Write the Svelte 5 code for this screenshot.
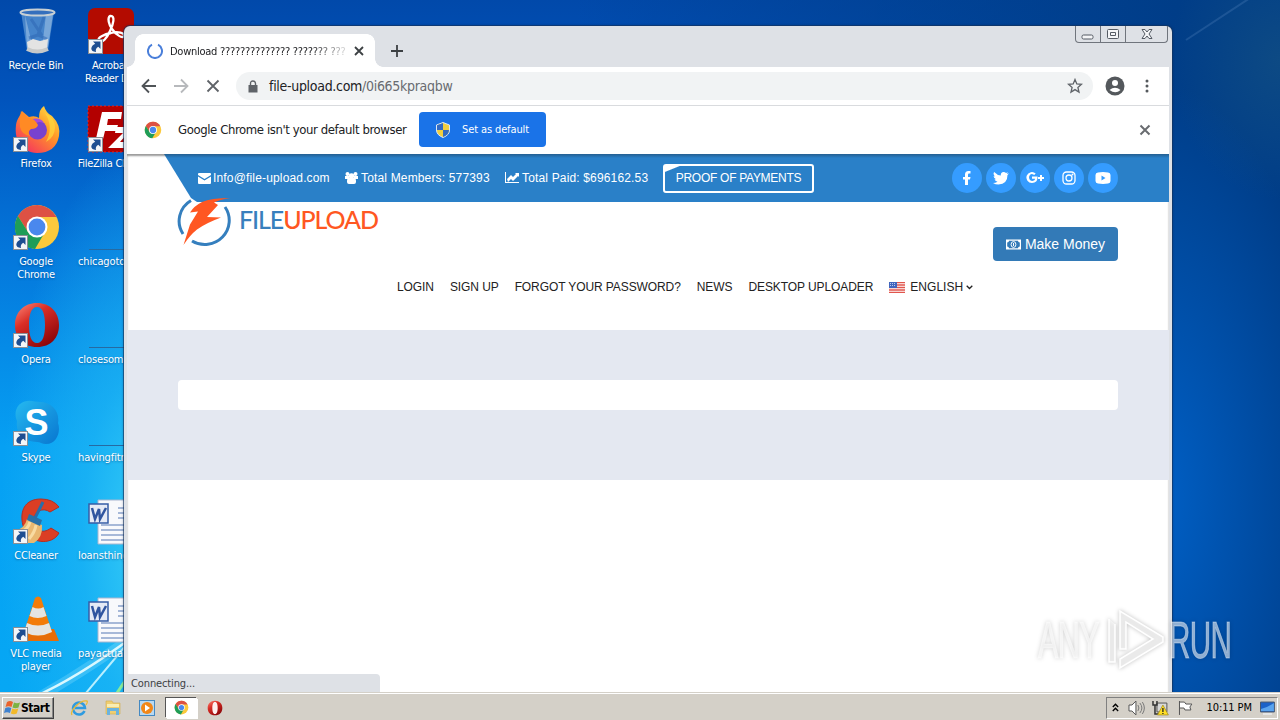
<script lang="ts">
	const shortcuts = [
		{ icon: 'bin', lines: ['Recycle Bin'], link: false },
		{ icon: 'firefox', lines: ['Firefox'], link: true },
		{ icon: 'chrome', lines: ['Google', 'Chrome'], link: true },
		{ icon: 'opera', lines: ['Opera'], link: true },
		{ icon: 'skype', lines: ['Skype'], link: true },
		{ icon: 'ccleaner', lines: ['CCleaner'], link: true },
		{ icon: 'vlc', lines: ['VLC media', 'player'], link: true }
	];

	const files = [
		{ icon: 'acrobat', lines: ['Acrobat', 'Reader DC'], link: true },
		{ icon: 'filezilla', lines: ['FileZilla Client'], link: true },
		{ icon: 'blank', lines: ['chicagoto'], link: false, doc: true },
		{ icon: 'blank', lines: ['closesome'], link: false, doc: true },
		{ icon: 'blank', lines: ['havingfitn'], link: false, doc: true },
		{ icon: 'word', lines: ['loansthing'], link: false, doc: true },
		{ icon: 'word', lines: ['payactual'], link: false, doc: true }
	];

	const socials = ['facebook', 'twitter', 'gplus', 'instagram', 'youtube'];
	const nav = ['LOGIN', 'SIGN UP', 'FORGOT YOUR PASSWORD?', 'NEWS', 'DESKTOP UPLOADER'];
</script>

{#snippet chromeLogo()}
	<circle cx="24" cy="24" r="22" fill="#fbc93c" />
	<path d="M4.900 13A22 22 0 0 1 43.500 14H24L15 29Z" fill="#dd5144" />
	<path d="M4.900 13A22 22 0 0 0 22 46L32 29 24 33 15 29Z" fill="#1f9d58" />
	<circle cx="24" cy="24" r="10.500" fill="#fff" />
	<circle cx="24" cy="24" r="8.400" fill="#4a88ee" />
{/snippet}

{#snippet operaLogo()}
	<path
		fill-rule="evenodd"
		fill="url(#opera-red)"
		d="M24 2C11 2 2 11 2 24s8 22 22 22 22-9 22-22S37 2 24 2Zm0 4c6 0 8 8 8 18s-2 18-8 18-8-8-8-18 2-18 8-18Z"
	/>
{/snippet}

{#snippet appIcon(name)}
	<svg class="app-icon" viewBox="0 0 48 48">
		{#if name === 'bin'}
			<path d="M8 5h33l-6 38q-10 5-21 0Z" fill="#6fa6dc" fill-opacity=".62" />
			<path d="m12 8 8 33h-6ZM33 7l-4 35 6-2 5-33Z" fill="#c6dcf0" fill-opacity=".4" />
			<path d="M18 12 28 27 16 31M31 10l-6 18 9 4" fill="none" stroke="#2c64b1" stroke-width="3" opacity=".5" />
			<path d="m14 35 6-3 7 2 8-2-1 10q-9 5-19 1Z" fill="#e3e3e3" />
			<path d="M14 42q10 5 21 0" fill="none" stroke="#c7c9c9" stroke-width="4" />
			<ellipse cx="24.500" cy="5.500" rx="17" ry="3" fill="#356fbd" stroke="#c7cfd4" stroke-width="2" />
		{:else if name === 'firefox'}
			<path
				d="M3 20C4 13 8 10 9 6l7 6q6-2 10 1 0-9 5-12 2 7 8 10 9 9 7 20-3 17-22 17C9 47 1 36 3 20Z"
				fill="url(#fox)"
			/>
			<circle cx="24.500" cy="25" r="9.500" fill="#7842cf" />
			<path d="M19 14q9-2 12 4-6-2-7 0Z" fill="#a44be0" />
			<path d="m8 6 6 7q7-1 11 7-1 4-7 4-4 3-1 7-8-1-10-9-1-8 1-16Z" fill="#ff8a24" />
			<path d="M32 8q10 5 10 14 0 10-9 15 8-15-1-29Z" fill="#ffd73c" opacity=".75" />
		{:else if name === 'chrome'}
			{@render chromeLogo()}
		{:else if name === 'opera'}
			{@render operaLogo()}
		{:else if name === 'skype'}
			<path
				d="M7 5C14-1 22 3 27 3c12 0 20 10 18 21 3 8-1 21-12 21-4 0-6-2-9-2C11 43 2 34 4 22 1 16 3 8 7 5Z"
				fill="url(#sky)"
			/>
			<text x="23.500" y="36" class="skype-letter">S</text>
		{:else if name === 'ccleaner'}
			<path
				d="M46 10Q40 2 28 2C13 2 8 12 9 23c1 14 13 24 26 21 5-1 9-4 11-8l-8-5c-9 7-17 2-17-8 0-9 9-13 16-8Z"
				fill="#db3e24"
				stroke="#b62e21"
			/>
			<path d="M2 34q10-3 12-12l15 6q1 12-8 18H10Z" fill="#e9b871" />
			<path d="M8 36q7-4 9-11M16 42q6-7 7-14" fill="none" stroke="#f8dba2" stroke-width="3" />
			<path d="m16 17 13 6-2 6-13-6Z" fill="#2971a8" />
			<path d="m22 21 8-16" stroke="#286eaa" stroke-width="3" />
		{:else if name === 'vlc'}
			<path d="m9 34-4 12h41l-5-12Z" fill="#e66d08" />
			<path d="M22 3q3-3 6 0l11 34q-14 8-28 0Z" fill="#f37c09" />
			<path d="m19.500 12-3 9q8 4 17 0l-3-9q-5 3-11 0Zm-5.500 16-3 9q14 7 28 0l-3-9q-11 5-22 0Z" fill="#e5e5e2" />
		{:else if name === 'acrobat'}
			<rect x="1" y="1" width="46" height="46" rx="7" fill="#b30b00" />
			<path
				d="M23 9c6-1 3 9 0 15-3 7-8 13-11 10s6-7 12-8c7-2 14 0 13 3s-8-1-12-7C22 18 20 11 23 9Z"
				fill="none"
				stroke="#fff"
				stroke-width="2.300"
			/>
		{:else if name === 'filezilla'}
			<rect x="1" y="1" width="46" height="46" fill="#b30000" stroke="#df2929" stroke-dasharray="2 2" />
			<path d="M15 7h20l-1 7H21l-1 6h11l-2 6H18l-3 12H8ZM29 22h17L33 37h12v6H21L36 28h-8Z" fill="#fff" />
		{:else if name === 'blank'}
			<path d="M2 46.500h46" stroke="#266aa2" />
		{:else if name === 'word'}
			<path d="M11 3h37v44H11Z" fill="#f8f9fc" stroke="#a8b6cf" />
			<path
				d="M31 11h14M31 16h14M31 21h14M14 28h33M14 33h33M14 38h33M14 43h33"
				stroke="#8ba3cb"
				stroke-width="1.500"
			/>
			<path d="M2 7h19v19H2Z" fill="#e5eaf6" stroke="#365da6" stroke-width="1.500" />
			<path d="m5 11 3 11 4-10 1 10 6-11" fill="none" stroke="#3055a0" stroke-width="2.500" />
		{/if}
	</svg>
{/snippet}

{#snippet desktopIcon(item)}
	<div class="shortcut" class:doc={item.doc}>
		<div class="picture">
			{@render appIcon(item.icon)}
			{#if item.link}
				<svg class="arrow" viewBox="0 0 15 15">
					<rect x=".5" y=".5" width="14" height="14" fill="#f4f6f8" stroke="#8a8f96" />
					<path d="M5 2.500h7.500V10L10.300 7.800Q7 9.500 8 13 3.300 12.500 3.300 9.500 3.500 6.500 7.200 4.700Z" fill="#1e4e91" />
				</svg>
			{/if}
		</div>
		{#each item.lines as line}
			<span>{line}</span>
		{/each}
	</div>
{/snippet}

<svg class="defs" width="0" height="0">
	<defs>
		<linearGradient id="opera-red" x2=".7" y2="1">
			<stop stop-color="#ff8a7b" />
			<stop offset=".4" stop-color="#d92e26" />
			<stop offset="1" stop-color="#8c0509" />
		</linearGradient>
		<linearGradient id="fox" x1="1" x2=".2" y2="1">
			<stop stop-color="#fff04b" />
			<stop offset=".45" stop-color="#ff9827" />
			<stop offset="1" stop-color="#f52e62" />
		</linearGradient>
		<linearGradient id="sky" x2="1" y2="1">
			<stop stop-color="#25b9f0" />
			<stop offset="1" stop-color="#0876d0" />
		</linearGradient>
	</defs>
</svg>

<div class="desktop">
	<svg class="wallpaper" viewBox="0 0 1280 692">
		<path d="M0 718Q75 680 150 624" fill="none" stroke="#a7ecff" stroke-width="10" opacity=".25" />
		<path d="M34 697Q82 676 150 624" fill="none" stroke="#d9f8ff" stroke-width="2.500" />
		<path d="m86 693 52-62" stroke="#b8efff" stroke-width="2" />
		<path d="m117 693 12-18" stroke="#87ec9a" stroke-width="3" />
		<path d="M1186 40 1250-2" stroke="#719bd0" stroke-width="2" opacity=".22" />
	</svg>

	<div class="icons">
		<div class="icon-column">
			{#each shortcuts as item}
				{@render desktopIcon(item)}
			{/each}
		</div>
		<div class="icon-column second">
			{#each files as item}
				{@render desktopIcon(item)}
			{/each}
		</div>
	</div>

	<div class="window">
		<div class="tab-strip">
			<div class="tab">
				<svg width="16" height="16" viewBox="0 0 16 16">
					<path d="M11 1.700A7 7 0 1 1 5 1.700" fill="none" stroke="#4a7fda" stroke-width="2" />
				</svg>
				<span class="title">Download ?????????????? ??????? ???</span>
				<svg width="10" height="10" viewBox="0 0 10 10">
					<path d="m1 1 8 8M9 1 1 9" stroke="#3c4043" stroke-width="1.800" />
				</svg>
			</div>
			<svg class="new-tab" width="14" height="14" viewBox="0 0 14 14">
				<path d="M7 1v12M1 7h12" stroke="#3c4043" stroke-width="1.800" />
			</svg>
			<div class="captions">
				<span><svg width="14" height="12"><rect x="1" y="7" width="11" height="4" rx="1.500" /></svg></span>
				<span>
					<svg width="14" height="12">
						<rect x="1.500" y="1.500" width="11" height="9" rx="1" />
						<path d="M4.500 4.500h5v3h-5Z" />
					</svg>
				</span>
				<span class="wide">
					<svg width="14" height="12">
						<path d="M2 1.500h3l2 2.500 2-2.500h3L9 6l3 4.500H9L7 8l-2 2.500H2L5 6Z" />
					</svg>
				</span>
			</div>
		</div>

		<div class="toolbar">
			<svg width="18" height="18" viewBox="0 0 18 18" class="line">
				<path d="M16 9H3M9 2.500 2.500 9 9 15.500" stroke="#505458" />
			</svg>
			<svg width="18" height="18" viewBox="0 0 18 18" class="line">
				<path d="M2 9h13M9 2.500 15.500 9 9 15.500" stroke="#b7b9bc" />
			</svg>
			<svg width="18" height="18" viewBox="0 0 18 18" class="line">
				<path d="m3.500 3.500 11 11M14.500 3.500l-11 11" stroke="#5f6368" />
			</svg>
			<div class="omnibox">
				<svg width="10" height="13" viewBox="0 0 10 13">
					<path d="M.5 5h9v7.500h-9Z" fill="#5f6368" />
					<path d="M2.500 6V3.500q0-2.500 2.500-2.500t2.500 2.500V6" fill="none" stroke="#5f6368" stroke-width="1.400" />
				</svg>
				<span class="url">file-upload.com<i>/0i665kpraqbw</i></span>
				<svg class="star" width="16" height="16" viewBox="0 0 16 16">
					<path d="m8 1.500 1.800 4.400 4.700.4-3.600 3.100 1.100 4.700L8 11.600l-4 2.500 1.100-4.700-3.600-3.100 4.700-.4Z" />
				</svg>
			</div>
			<svg width="20" height="20" viewBox="0 0 20 20">
				<circle cx="10" cy="10" r="9.500" fill="#54585c" />
				<circle cx="10" cy="7" r="3" fill="#fff" />
				<path d="M4.500 14q5.500-4.500 11 0-5 4.500-11 0Z" fill="#fff" />
			</svg>
			<svg class="dots" width="4" height="16" viewBox="0 0 4 16">
				<circle cx="2" cy="3" r="1.500" /><circle cx="2" cy="8" r="1.500" /><circle cx="2" cy="13" r="1.500" />
			</svg>
		</div>

		<div class="infobar">
			<svg width="18" height="18" viewBox="0 0 48 48">{@render chromeLogo()}</svg>
			<span class="message">Google Chrome isn't your default browser</span>
			<button type="button" class="default">
				<svg width="14" height="16" viewBox="0 0 14 16">
					<path d="M7 .5 13.500 3v5q0 5-6.500 7.500Q.5 13 .5 8V3Z" fill="#f2cf3e" stroke="#dce8f7" />
					<path d="M7 1v7H1V3.300ZM7 8h6q0 5-6 7Z" fill="#326ac2" />
				</svg>
				<span>Set as default</span>
			</button>
			<svg class="dismiss" width="12" height="12" viewBox="0 0 12 12">
				<path d="m1.500 1.500 9 9M10.500 1.500l-9 9" stroke="#696c70" stroke-width="2" />
			</svg>
		</div>

		<div class="page">
			<div class="top-bar">
				<span class="stat">
					<svg width="13" height="14" viewBox="0 0 13 14">
						<path d="M0 3q0-1 1-1h11q1 0 1 1v1L6.500 8 0 4ZM0 5.500l6.500 4 6.500-4V12q0 1-1 1H1q-1 0-1-1Z" />
					</svg>
					<b class="mail">Info@file-upload.com</b>
				</span>
				<span class="stat">
					<svg width="13" height="14" viewBox="0 0 13 14">
						<circle cx="2.500" cy="3" r="2" /><circle cx="10.500" cy="3" r="2" /><circle cx="6.500" cy="5" r="2.800" />
						<path d="M0 5h4v3H0ZM9 5h4v3H9ZM2 10q0-3 2-3h5q2 0 2 3v1q0 2-2 2H4q-2 0-2-2Z" />
					</svg>
					<b class="members">Total Members: 577393</b>
				</span>
				<span class="stat">
					<svg width="14" height="14" viewBox="0 0 14 14">
						<path d="M0 1h1v10h13v1H0ZM2 8l4-4 2 2 3-3-1-1h4v4l-1-1-5 5-2-2-3 3Z" />
					</svg>
					<b class="paid">Total Paid: $696162.53</b>
				</span>
				<button type="button" class="proof">PROOF OF PAYMENTS</button>
				<div class="socials">
					{#each socials as social}
						<span>
							<svg width="18" height="18" viewBox="0 0 18 18">
								{#if social === 'facebook'}
									<path d="M12.500 2v2.500H11q-1 0-1 1.200V8h2.500L12 10.500h-2V16H7v-5.500H5V8h2V5.500Q7 2 10.500 2Z" />
								{:else if social === 'twitter'}
									<path
										d="M17 4.500 15.500 6q0 9-9 9.500Q3.500 15.500 1 14q2.500 0 4.500-1.300Q3 12 2.500 10.300H4Q1.500 9 1.600 7l1.400.4Q.6 5 2.200 3q3 3.300 6.600 3.500Q8.500 3 11.700 3q1.300 0 2.300 1l2-.8-1.300 1.800Z"
									/>
								{:else if social === 'gplus'}
									<path
										d="M6 7.500h5.500q.4 6.500-5.500 6.500a5.500 5.500 0 1 1 3.700-9.500L8.200 6Q4 3.300 3 8q.2 4 3.500 4Q9 11.600 9.200 9.700H6ZM14 6h2v2h2v2h-2v2h-2v-2h-2V8h2Z"
									/>
								{:else if social === 'instagram'}
									<g fill="none" stroke="#fff" stroke-width="1.300">
										<rect x="3" y="3" width="12" height="12" rx="3.500" />
										<circle cx="9" cy="9" r="3" />
									</g>
									<circle cx="12.500" cy="5.500" r="1" />
								{:else}
									<path
										fill-rule="evenodd"
										d="M4 3.500q5-.8 10 0 2.500.2 2.500 2.500v6q0 2.300-2.500 2.500-5 .8-10 0Q1.500 14.300 1.500 12V6Q1.500 3.700 4 3.500Zm3.500 3v5l4-2.500Z"
									/>
								{/if}
							</svg>
						</span>
					{/each}
				</div>
			</div>

			<header>
				<div class="brand-row">
					<div class="brand">
						<svg width="54" height="50" viewBox="0 0 54 50">
							<path
								d="M14 3.500A24.500 24 0 0 0 6 37M15 44A24.500 24 0 0 0 48 10"
								fill="none"
								stroke="#357fbe"
								stroke-width="3"
							/>
							<path
								d="M53.500 1Q34 1 25 5 17 9 13 15.500l8-1-8 13L6.500 48Q13 38 20 32.500 29 26 44 20.500L30 20 41 8l-4-2.500Q44 2 53.500 1Z"
								fill="#ff5722"
							/>
						</svg>
						<strong>FILE<em>UPLOAD</em></strong>
					</div>
					<button type="button" class="money">
						<svg width="15" height="11" viewBox="0 0 15 11">
							<path
								d="M0 .5h15v10H0ZM3 1.700Q3 3.500 1.200 3.500v4Q3 7.500 3 9.300h9q0-1.800 1.800-1.800v-4Q12 3.500 12 1.700Z"
								fill-rule="evenodd"
							/>
							<ellipse cx="7.500" cy="5.500" rx="2.400" ry="2.900" fill="none" stroke="#fff" />
							<path d="M7 4h1v3H7Z" />
						</svg>
						<span>Make Money</span>
					</button>
				</div>
				<nav>
					{#each nav as label}
						<span>{label}</span>
					{/each}
					<span class="language">
						<svg width="16" height="11" viewBox="0 0 16 11">
							<path d="M0 0h16v11H0Z" fill="#fff" />
							<path d="M0 .5h16M0 3h16M0 5.500h16M0 8h16M0 10.500h16" stroke="#e1564d" stroke-width="1.300" />
							<path d="M0 0h8v6H0Z" fill="#4165bd" />
							<path d="M1 1.500h6M1 3.500h6" stroke="#b9c9ed" stroke-dasharray="1 1" />
						</svg>
						<span>ENGLISH</span>
						<svg width="7" height="5" viewBox="0 0 7 5">
							<path d="m.7.700 2.800 2.800L6.300.7" fill="none" stroke="#222" stroke-width="1.300" />
						</svg>
					</span>
				</nav>
			</header>

			<main><div class="panel"></div></main>
			<div class="status">Connecting...</div>
		</div>
	</div>

	<div class="watermark">
		<span>ANY</span>
		<svg width="58" height="66" viewBox="0 0 58 66">
			<path d="M2 11v43h6V16M13 3v38h6V14l27 17-33 20v9l43-26v-5Z" />
		</svg>
		<span class="run">RUN</span>
	</div>

	<div class="taskbar">
		<div class="start">
			<svg width="17" height="16" viewBox="0 0 17 16">
				<path d="M3 2q3-2 6 0L7.500 7q-3-1.500-6 0Z" fill="#ea632c" />
				<path d="M10 2.500q3 1.500 6 0l-1.500 5q-3 1.500-6 0Z" fill="#7cb342" />
				<path d="M1.300 8q3-1.500 6 0L6 13q-3-1.500-6 0Z" fill="#3f82cf" />
				<path d="M8.300 8.500q3 1.500 6 0l-1.500 5q-3 1.500-6 0Z" fill="#f2b929" />
			</svg>
			Start
		</div>
		<div class="pinned">
			<span>
				<svg width="18" height="18" viewBox="0 0 18 18">
					<path d="M14.500 12A6 6 0 1 1 15 9H5" fill="none" stroke="#2f9be0" stroke-width="2.500" />
					<path d="M2 16Q0 13 6 7t11-5q1 1-1 4" fill="none" stroke="#e8b936" stroke-width="1.300" />
				</svg>
			</span>
			<span>
				<svg width="16" height="16" viewBox="0 0 16 16">
					<path d="M1 1h6l1 2h7v11H1Z" fill="#efce72" stroke="#d2ac4c" stroke-width=".6" />
					<path d="M2 4h12v3H2Z" fill="#f9edb3" />
					<path d="M2 8h12v7h-3v-4H5v4H2Z" fill="#6bb3df" />
				</svg>
			</span>
			<span>
				<svg width="16" height="16" viewBox="0 0 16 16">
					<rect x=".5" y=".5" width="15" height="15" fill="#b8d9f2" stroke="#4489c2" />
					<circle cx="8" cy="8" r="6" fill="#f28718" />
					<path d="m6 4.500 5 3.500-5 3.500Z" fill="#fff" />
				</svg>
			</span>
			<span class="active"><svg width="15" height="15" viewBox="0 0 48 48">{@render chromeLogo()}</svg></span>
			<span>
				<svg width="16" height="16" viewBox="0 0 48 48">
					<circle cx="24" cy="24" r="20" fill="#fff0ef" />
					{@render operaLogo()}
				</svg>
			</span>
		</div>
		<div class="tray">
			<svg width="7" height="9" viewBox="0 0 7 9">
				<path d="m.8 4 2.700-2.700L6.200 4M.8 8l2.700-2.700L6.200 8" fill="none" stroke="#000" stroke-width="1.400" />
			</svg>
			<svg width="17" height="16" viewBox="0 0 17 16" class="speaker">
				<path d="M1 5h3l4-4v14l-4-4H1Z" fill="#fff" stroke="#555" />
				<path d="M10 5q2 3 0 6M12 3q4 5 0 10M14.500 2q4 6 0 12" fill="none" stroke="#777" />
			</svg>
			<svg width="17" height="16" viewBox="0 0 17 16" class="network">
				<path d="M5 3h10v9H5Z" fill="#d8d8d8" stroke="#555" />
				<path d="M1 1v4h4V1M3 5v9h4" fill="none" stroke="#333" stroke-width="1.500" />
				<path d="m11 5 5.500 10h-11Z" fill="#ffde24" stroke="#9b8519" stroke-width=".7" />
				<path d="M11 8v4M11 13v1" stroke="#222" stroke-width="1.300" />
			</svg>
			<svg width="16" height="16" viewBox="0 0 16 16" class="flag">
				<path d="M2.500 15V1M2.500 2h5l1.500 2h6l-2 3 1 3H8L7 8H3" fill="#fff" stroke="#555" />
			</svg>
			<span class="clock">10:11 PM</span>
			<svg width="15" height="14" viewBox="0 0 15 14">
				<path d="M.5 1h14v10H.5Z" fill="#1c62c8" stroke="#48586e" />
				<path d="M1 8Q7 7 14 2v8H1Z" fill="#5ba4ed" />
				<path d="M3 13h9" stroke="#e6e6e6" stroke-width="2" />
			</svg>
		</div>
	</div>
</div>

<style>
	:global(body) {
		margin: 0;
		overflow: hidden;
	}

	.defs {
		position: absolute;
	}

	.desktop {
		position: relative;
		width: 1280px;
		height: 720px;
		overflow: hidden;
		display: flex;
		flex-direction: column;
		font-family: 'DejaVu Sans Condensed', 'DejaVu Sans', sans-serif;
		font-size: 11px;
		background:
			radial-gradient(ellipse 150px 400px at 150px 540px, #38cdf6 0, #20b8f5aa 45%, transparent 100%),
			radial-gradient(ellipse 190px 420px at 1150px 500px, #0061c8 0, transparent 100%),
			radial-gradient(ellipse 110px 140px at 1280px 60px, #0d4a84 0, transparent 100%),
			linear-gradient(90deg, transparent 45%, #003d88 92%),
			linear-gradient(#0149aa, #0154bd 14%, #0478dc 36%, #06a0f3 62%, #06a8f4);
	}

	.wallpaper {
		position: absolute;
		inset: 0;
		width: 1280px;
		height: 692px;
	}

	.icons {
		height: 692px;
		display: flex;
		position: relative;
	}

	.icon-column {
		width: 72px;
		padding-top: 7px;
		box-sizing: border-box;
	}

	.second {
		width: 76px;
	}

	.shortcut {
		height: 98px;
		display: flex;
		flex-direction: column;
		align-items: center;
		color: #fff;
		line-height: 13px;
		white-space: nowrap;
		letter-spacing: -0.2px;
		text-shadow: 0 1px 2px #0038708c;
	}

	.second .shortcut {
		letter-spacing: -0.3px;
	}

	.second .shortcut.doc {
		letter-spacing: -0.12px;
	}

	.doc span {
		align-self: flex-start;
		margin-left: 6px;
	}

	.picture {
		width: 48px;
		height: 52px;
		display: grid;
		justify-items: start;
		align-items: start;
	}

	.second .picture {
		margin-left: 2px;
	}

	.app-icon {
		grid-area: 1 / 1;
		width: 48px;
		height: 48px;
	}

	.icon-column:not(.second) .app-icon {
		margin-left: 1px;
	}

	.arrow {
		grid-area: 1 / 1;
		margin: 32px 0 0 1px;
		width: 15px;
		height: 15px;
	}

	.skype-letter {
		font: bold 36px 'Liberation Sans', sans-serif;
		fill: #fff;
		text-shadow: none;
		text-anchor: middle;
	}

	.window {
		position: absolute;
		left: 124px;
		top: 26px;
		width: 1048px;
		height: 666px;
		box-sizing: border-box;
		padding: 0 3px;
		display: flex;
		flex-direction: column;
		background: #dee1e6;
		border-radius: 6px 6px 0 0;
		box-shadow:
			0 0 0 1px #17355e99,
			0 0 3px #001b4499;
		color: #202124;
	}

	.tab-strip {
		height: 41px;
		display: flex;
		align-items: flex-end;
	}

	/* the side gradients are the curved feet of the tab */
	.tab {
		width: 256px;
		height: 33px;
		padding: 1px 19px 0 20px;
		box-sizing: border-box;
		display: flex;
		align-items: center;
		background:
			radial-gradient(circle at 0 0, transparent 7.5px, #fff 8px) 0 100% / 8px 8px no-repeat,
			radial-gradient(circle at 100% 0, transparent 7.5px, #fff 8px) 100% 100% / 8px 8px no-repeat,
			radial-gradient(circle at 100% 100%, #fff 7.5px, transparent 8px) 8px 0 / 8px 8px no-repeat,
			radial-gradient(circle at 0 100%, #fff 7.5px, transparent 8px) 240px 0 / 8px 8px no-repeat,
			linear-gradient(#fff, #fff) 16px 0 / 224px 8px no-repeat,
			linear-gradient(#fff, #fff) 8px 8px / 240px 25px no-repeat;
	}

	.title {
		width: 177px;
		margin: 0 7px 0 7px;
		white-space: nowrap;
		letter-spacing: -0.26px;
		mask-image: linear-gradient(90deg, #000 80%, #0002);
	}

	.new-tab {
		margin: 0 0 9px 7px;
	}

	.captions {
		align-self: flex-start;
		margin: 0 1px 0 auto;
		height: 16px;
		display: flex;
		border: 1px solid #70757d;
		border-top: 0;
		border-radius: 0 0 4px 4px;
	}

	.captions span {
		width: 24px;
		display: flex;
		justify-content: center;
		align-items: center;
		border-right: 1px solid #70757d;
	}

	.captions .wide {
		width: 41px;
		border: 0;
	}

	.captions svg {
		fill: #f4f5f7;
		stroke: #555b64;
	}

	.toolbar {
		height: 38px;
		display: flex;
		align-items: center;
		background: #fff;
		border-bottom: 1px solid #d9dbde;
		padding: 0 20px 0 13px;
	}

	.line {
		fill: none;
		stroke-width: 1.8;
		margin-right: 14px;
	}

	.omnibox {
		flex: 1;
		height: 28px;
		margin-right: 12px;
		padding: 0 10px 0 12px;
		display: flex;
		align-items: center;
		background: #f1f3f4;
		border-radius: 14px;
	}

	.url {
		margin-left: 11px;
		font-size: 14px;
		letter-spacing: -0.3px;
	}

	.url i {
		font-style: normal;
		color: #686b70;
	}

	.star {
		margin-left: auto;
		fill: none;
		stroke: #5f6368;
		stroke-width: 1.3;
	}

	.dots {
		margin-left: 20px;
		fill: #55595d;
	}

	.infobar {
		height: 48px;
		box-sizing: border-box;
		display: flex;
		align-items: center;
		background: #fff;
		padding: 0 18px 1px 17px;
	}

	.message {
		width: 229px;
		margin: 0 12px 0 16px;
		font-size: 13px;
		letter-spacing: -0.4px;
		white-space: nowrap;
	}

	button {
		font: inherit;
		border: 0;
		padding: 0;
	}

	.default {
		width: 127px;
		height: 35px;
		display: flex;
		align-items: center;
		justify-content: center;
		gap: 12px;
		background: #1a73e8;
		border-radius: 4px;
		color: #fff;
		letter-spacing: -0.12px;
		white-space: nowrap;
	}

	.dismiss {
		margin-left: auto;
	}

	.page {
		position: relative;
		flex: 1;
		background: #fff;
		font-family: 'Liberation Sans', Arial, sans-serif;
		box-shadow: inset 0 2px 2px #0006;
	}

	.top-bar {
		height: 48px;
		box-sizing: border-box;
		padding: 0 51px 0 71px;
		display: flex;
		align-items: center;
		color: #fff;
		background: linear-gradient(#245f91, #2a80c8 4px);
		clip-path: polygon(37px 0, 100% 0, 100% 100%, 70px 100%, 64px 44px);
	}

	.stat {
		display: flex;
		align-items: center;
		gap: 3px;
		margin-right: 15px;
		fill: #fff;
	}

	.stat:first-child {
		gap: 2px;
	}

	.stat b {
		font-weight: normal;
		font-size: 12px;
		white-space: nowrap;
	}

	.mail {
		width: 117px;
		letter-spacing: 0.16px;
	}

	.members {
		width: 129px;
		letter-spacing: 0.16px;
	}

	.paid {
		width: 126px;
		letter-spacing: 0.16px;
	}

	.proof {
		width: 151px;
		height: 29px;
		border: 2px solid #fff;
		border-radius: 3px;
		color: #fff;
		font-size: 12px;
		letter-spacing: -0.28px;
		white-space: nowrap;
		background: linear-gradient(158deg, #fff 5px, transparent 6px);
	}

	.socials {
		margin-left: auto;
		display: flex;
		gap: 4px;
	}

	.socials span {
		width: 30px;
		height: 30px;
		display: flex;
		align-items: center;
		justify-content: center;
		border-radius: 50%;
		background: #359cff;
		fill: #fff;
	}

	header {
		height: 128px;
	}

	.brand-row {
		height: 77px;
		padding: 0 51px 0 50px;
		display: flex;
		justify-content: space-between;
		align-items: flex-start;
	}

	.brand {
		position: relative;
		margin-top: -5px;
		display: flex;
	}

	.brand strong {
		margin: 7px 0 0 8px;
		font: 500 25px/30px Lato, sans-serif;
		letter-spacing: -1.1px;
		color: #387fbd;
	}

	.brand em {
		font-style: normal;
		color: #ff5722;
	}

	.money {
		width: 125px;
		height: 34px;
		margin-top: 25px;
		display: flex;
		align-items: center;
		justify-content: center;
		gap: 4px;
		background: #337ab7;
		border-radius: 4px;
		color: #fff;
		fill: #fff;
		font-size: 14px;
		white-space: nowrap;
	}

	nav {
		padding-left: 270px;
		display: flex;
		gap: 16px;
		color: #222;
		font-size: 12px;
		line-height: 16px;
		letter-spacing: -0.09px;
		white-space: nowrap;
	}

	.language {
		display: flex;
		align-items: center;
		gap: 5px;
	}

	.language span {
		width: 51px;
		letter-spacing: 0.05px;
	}

	main {
		height: 150px;
		box-sizing: border-box;
		padding: 50px 51px;
		background: #e4e8f1;
	}

	.panel {
		height: 30px;
		background: #fff;
		border-radius: 4px;
	}

	.status {
		position: absolute;
		left: 0;
		bottom: 0;
		width: 253px;
		height: 18px;
		padding: 1px 4px 0;
		box-sizing: border-box;
		border-radius: 0 4px 0 0;
		background: #dee1e6;
		color: #3c4043;
		font: 11px/18px 'DejaVu Sans Condensed', sans-serif;
		letter-spacing: -0.12px;
	}

	.watermark {
		position: absolute;
		left: 1038px;
		top: 608px;
		height: 66px;
		display: flex;
		align-items: center;
		color: #ffffff90;
		filter: drop-shadow(0 0 2px #0000004d);
	}

	.watermark span {
		width: 62px;
		font: 51px/66px 'Liberation Sans', sans-serif;
		letter-spacing: -1px;
		-webkit-text-stroke: 1px #ffffff60;
		transform: scaleX(0.6);
		transform-origin: left;
	}

	.watermark .run {
		transform: scaleX(0.58);
	}

	.watermark svg {
		margin: 0 4px 0 7px;
		fill: #ffffff80;
		stroke: #fff;
		stroke-width: 1.5;
	}

	.taskbar {
		position: relative;
		height: 28px;
		box-sizing: border-box;
		display: flex;
		align-items: center;
		padding: 3px 2px 1px;
		background: #d4d0c8;
		border-top: 1px solid #d4d0c8;
		box-shadow: inset 0 1px #fff;
	}

	.start {
		width: 52px;
		height: 22px;
		box-sizing: border-box;
		padding-left: 1px;
		display: flex;
		align-items: center;
		border: 1px solid;
		border-color: #fff #404040 #404040 #fff;
		box-shadow: inset -1px -1px #888;
		font-weight: bold;
		font-size: 12px;
		letter-spacing: -0.45px;
	}

	.pinned {
		display: flex;
		margin-left: 8px;
	}

	.pinned span {
		width: 34px;
		height: 22px;
		display: flex;
		align-items: center;
		justify-content: center;
	}

	.pinned .active {
		width: 31px;
		height: 20px;
		margin: 1px 1px 1px 2px;
		background: #fff;
		box-shadow:
			-1px -1px #555,
			1px 1px #fff;
	}

	.tray {
		width: 172px;
		height: 22px;
		margin-left: auto;
		box-sizing: border-box;
		padding: 0 2px 0 5px;
		display: flex;
		align-items: center;
		border: 1px solid;
		border-color: #808080 #fff #fff #808080;
	}

	.speaker {
		margin-left: 9px;
	}

	.network {
		margin-left: 7px;
	}

	.flag {
		margin-left: 8px;
	}

	.clock {
		margin: 0 8px 0 14px;
		width: 46px;
		letter-spacing: -0.1px;
		white-space: nowrap;
	}
</style>
